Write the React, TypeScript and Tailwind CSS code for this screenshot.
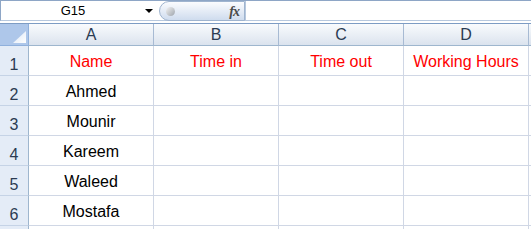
import React from 'react'

const rows = [
  { n: 1, name: 'Name', header: true },
  { n: 2, name: 'Ahmed' },
  { n: 3, name: 'Mounir' },
  { n: 4, name: 'Kareem' },
  { n: 5, name: 'Waleed' },
  { n: 6, name: 'Mostafa' },
]

const headings = ['Time in', 'Time out', 'Working Hours']

export default function App() {
  return (
    <div className="w-[531px] h-[229px] overflow-hidden bg-white font-['Liberation_Sans',Arial,sans-serif] select-none">
      {/* Formula bar */}
      <div className="flex h-[21px] border-t border-l border-b border-t-[#8ea6c6] border-l-[#8ea6c6] border-b-[#b7c8de]">
        <div className="relative w-[158px] flex items-center justify-center text-[13px] text-black pr-[14px]">
          G15
          <span className="absolute right-[6px] top-[8px] w-0 h-0 border-l-[4px] border-r-[4px] border-t-[4px] border-l-transparent border-r-transparent border-t-black" />
        </div>
        <div className="w-[86px] h-[20px] flex items-center rounded-l-full border border-[#9fb4cf] bg-gradient-to-b from-[#fbfcfe] to-[#cfdcee] pl-[6px] pr-[5px]">
          <span className="w-[9px] h-[9px] rounded-full bg-gradient-to-br from-[#f4f4f4] to-[#9ea4ac]" />
          <span className="ml-auto font-['Liberation_Serif',serif] italic font-bold text-[14px] text-[#4a4a4a] tracking-[-1px]">
            fx
          </span>
        </div>
        <div className="flex-1 border-l border-[#b7c8de] bg-white" />
      </div>
      <div className="h-[2px] bg-white" />

      {/* Grid */}
      <div className="border-t border-[#7d9cc4] grid grid-cols-[29px_125px_125px_125px_125px_1fr] auto-rows-[30px] grid-rows-[22px]">
        {/* Corner */}
        <div className="relative bg-[#aec7ea] border-r border-b border-[#8fb0dc]">
          <span className="absolute right-[2px] bottom-[2px] w-[13px] h-[12px] bg-gradient-to-br from-[#d9e5f5] to-[#ffffff] [clip-path:polygon(100%_0,100%_100%,0_100%)]" />
        </div>
        {['A', 'B', 'C', 'D'].map((c) => (
          <div
            key={c}
            className="flex items-center justify-center pt-[1px] bg-gradient-to-b from-[#f9fbfd] to-[#dbe3ee] border-r border-b border-r-[#a7bad3] border-b-[#9eb6ce] text-[16px] text-[#2b3b52]"
          >
            {c}
          </div>
        ))}
        <div className="bg-gradient-to-b from-[#f9fbfd] to-[#dbe3ee] border-b border-[#9eb6ce]" />

        {rows.map((r) => (
          <React.Fragment key={r.n}>
            <div className="flex items-end justify-center pb-[2px] bg-[#e4ecf7] border-r border-b border-r-[#9eb6ce] border-b-[#c5d3e6] text-[16px] leading-none text-[#2b3b52]">
              {r.n}
            </div>
            <div
              className={`flex items-center justify-center pt-[2px] border-r border-b border-[#d0d7e5] text-[16px] ${
                r.header ? 'text-[#ff0000]' : 'text-black'
              }`}
            >
              {r.name}
            </div>
            {headings.map((h) => (
              <div
                key={h}
                className="flex items-center justify-center pt-[2px] border-r border-b border-[#d0d7e5] text-[16px] text-[#ff0000]"
              >
                {r.header ? h : ''}
              </div>
            ))}
            <div className="border-b border-[#d0d7e5]" />
          </React.Fragment>
        ))}
        <div className="bg-[#e4ecf7] border-r border-[#9eb6ce]" />
        <div className="border-r border-[#d0d7e5]" />
        <div className="border-r border-[#d0d7e5]" />
        <div className="border-r border-[#d0d7e5]" />
        <div className="border-r border-[#d0d7e5]" />
        <div />
      </div>
    </div>
  )
}
